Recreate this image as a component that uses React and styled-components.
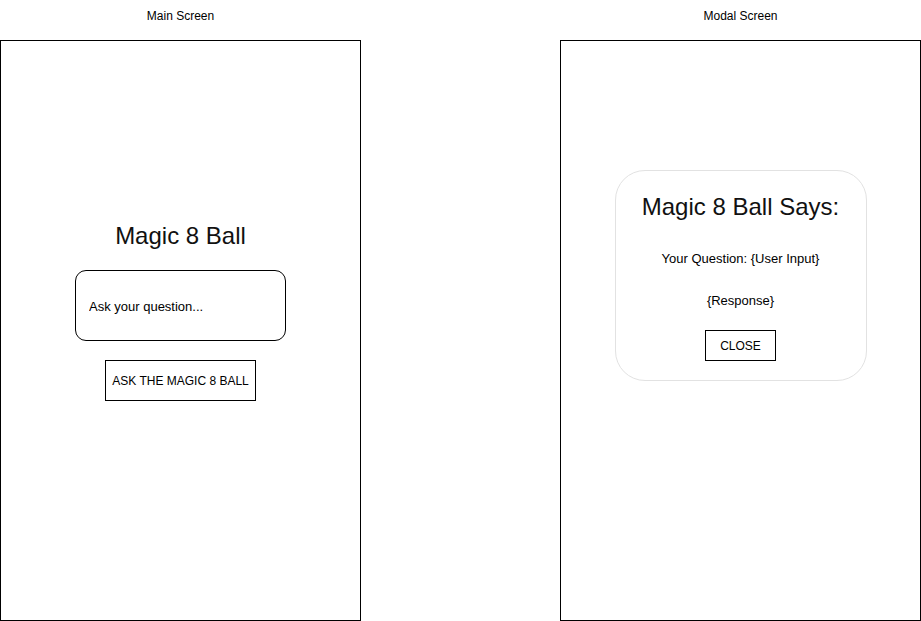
import React from "react";
import styled, { createGlobalStyle } from "styled-components";

const GlobalStyle = createGlobalStyle`
  html, body {
    margin: 0;
    padding: 0;
    background: #ffffff;
  }
  body {
    font-family: "Liberation Sans", Arial, Helvetica, sans-serif;
    color: #000000;
  }
  * { box-sizing: border-box; }
`;

const Page = styled.div`
  display: grid;
  grid-template-columns: 361px 361px;
  column-gap: 199px;
  width: 921px;
  height: 621px;
  overflow: hidden;
`;

const Column = styled.section`
  display: flex;
  flex-direction: column;
`;

const Label = styled.div`
  height: 40px;
  padding-top: 9px;
  font-size: 12px;
  line-height: 14px;
  text-align: center;
  color: #000;
`;

const Frame = styled.div`
  height: 581px;
  border: 1px solid #000;
  display: flex;
  flex-direction: column;
  align-items: center;
  padding-top: ${(p) => p.$top}px;
`;

const Title = styled.h1`
  margin: 0;
  font-size: 24px;
  line-height: 28px;
  font-weight: 400;
  color: #111;
  white-space: nowrap;
`;

const QuestionInput = styled.input`
  margin-top: 20px;
  width: 211px;
  height: 71px;
  border: 1px solid #000;
  border-radius: 11px;
  padding: 2px 0 0 13px;
  font-family: inherit;
  font-size: 13px;
  color: #000;
  background: #fff;
  outline: none;
  &::placeholder {
    color: #000;
    opacity: 1;
  }
`;

const BoxButton = styled.button`
  margin-top: ${(p) => p.$mt}px;
  width: ${(p) => p.$w}px;
  height: ${(p) => p.$h}px;
  border: 1px solid #000;
  border-radius: 0;
  background: #fff;
  padding: 0;
  font-family: inherit;
  font-size: 12px;
  color: #000;
  cursor: pointer;
`;

const Card = styled.div`
  width: 252px;
  height: 211px;
  border: 1px solid #e2e2e2;
  border-radius: 30px;
  display: flex;
  flex-direction: column;
  align-items: center;
  padding-top: 22px;
  background: #fff;
`;

const Line = styled.p`
  margin: ${(p) => p.$mt}px 0 0;
  font-size: 13px;
  line-height: 16px;
  color: #000;
  white-space: nowrap;
`;

export default function App() {
  return (
    <>
      <GlobalStyle />
      <Page>
        <Column>
          <Label>Main Screen</Label>
          <Frame $top={181}>
            <Title>Magic 8 Ball</Title>
            <QuestionInput placeholder="Ask your question..." />
            <BoxButton $mt={19} $w={151} $h={41}>
              ASK THE MAGIC 8 BALL
            </BoxButton>
          </Frame>
        </Column>
        <Column>
          <Label>Modal Screen</Label>
          <Frame $top={129}>
            <Card>
              <Title>Magic 8 Ball Says:</Title>
              <Line $mt={30}>Your Question: {"{User Input}"}</Line>
              <Line $mt={26}>{"{Response}"}</Line>
              <BoxButton $mt={21} $w={71} $h={31}>
                CLOSE
              </BoxButton>
            </Card>
          </Frame>
        </Column>
      </Page>
    </>
  );
}
